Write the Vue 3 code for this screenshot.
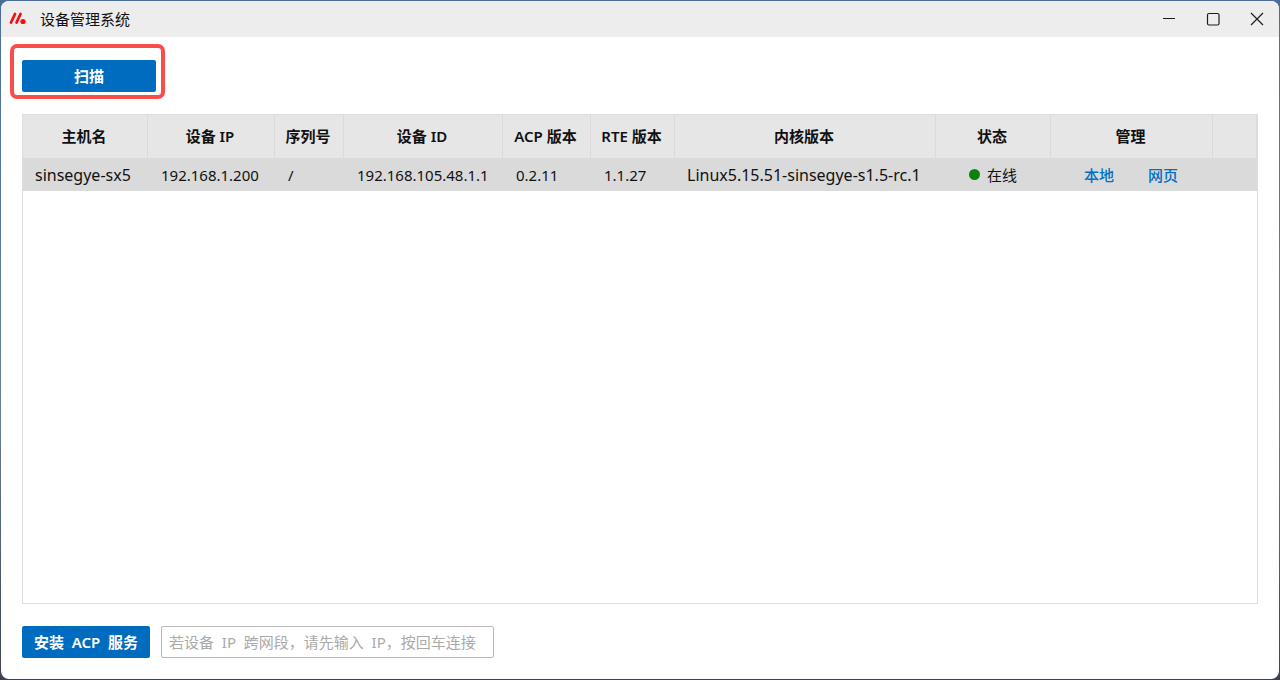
<script setup>
import { ref } from 'vue'

const address = ref('')

const columns = [
  { title: '主机名', cls: 'host' },
  { title: '设备 IP', cls: 'ip' },
  { title: '序列号', cls: 'serial' },
  { title: '设备 ID', cls: 'device' },
  { title: 'ACP 版本', cls: 'acp' },
  { title: 'RTE 版本', cls: 'rte' },
  { title: '内核版本', cls: 'kernel' },
  { title: '状态', cls: 'status' },
  { title: '管理', cls: 'manage' },
  { title: '', cls: 'rest' },
]

const devices = [
  {
    host: 'sinsegye-sx5',
    ip: '192.168.1.200',
    serial: '/',
    id: '192.168.105.48.1.1',
    acp: '0.2.11',
    rte: '1.1.27',
    kernel: 'Linux5.15.51-sinsegye-s1.5-rc.1',
    status: '在线',
  },
]
</script>

<template>
  <div class="desktop">
    <div class="window">
      <header class="titlebar">
        <svg class="logo" viewBox="0 0 18 14" aria-hidden="true">
          <path d="M2 10.5 6 2M7.5 10.5l4-8.5" fill="none" stroke="#fb0d12" stroke-width="2.8" stroke-linecap="round" />
          <circle cx="14" cy="9.5" r="2.6" fill="#fb0d12" />
        </svg>
        <h1>设备管理系统</h1>
        <div class="controls">
          <button type="button" aria-label="最小化">
            <svg viewBox="0 0 14 14"><path d="M1 6.5h12" /></svg>
          </button>
          <button type="button" aria-label="最大化">
            <svg viewBox="0 0 14 14"><rect x="1.5" y="1.5" width="11.5" height="11.5" rx="1.5" /></svg>
          </button>
          <button type="button" aria-label="关闭">
            <svg viewBox="0 0 14 14"><path d="m1 1 12 12M13 1 1 13" /></svg>
          </button>
        </div>
      </header>

      <main class="content">
        <div class="highlight">
          <button type="button" class="primary scan">扫描</button>
        </div>

        <div class="grid">
          <table>
            <colgroup>
              <col v-for="c in columns" :key="c.cls" :class="c.cls" />
            </colgroup>
            <thead>
              <tr>
                <th v-for="c in columns" :key="c.cls" scope="col">{{ c.title }}</th>
              </tr>
            </thead>
            <tbody>
              <tr v-for="d in devices" :key="d.id">
                <td class="name">{{ d.host }}</td>
                <td>{{ d.ip }}</td>
                <td>{{ d.serial }}</td>
                <td>{{ d.id }}</td>
                <td>{{ d.acp }}</td>
                <td>{{ d.rte }}</td>
                <td class="name">{{ d.kernel }}</td>
                <td>
                  <span class="state"><span class="dot"></span>{{ d.status }}</span>
                </td>
                <td>
                  <span class="links"><a href="#local">本地</a><a href="#web">网页</a></span>
                </td>
                <td></td>
              </tr>
            </tbody>
          </table>
        </div>

        <footer class="actions">
          <button type="button" class="primary install">安装&nbsp; ACP&nbsp; 服务</button>
          <input
            v-model="address"
            type="text"
            aria-label="设备 IP"
            placeholder="若设备  IP  跨网段，请先输入  IP，按回车连接"
          />
        </footer>
      </main>
    </div>
  </div>
</template>

<style>
body {
  margin: 0;
}
</style>

<style scoped>
.desktop {
  box-sizing: border-box;
  height: 100vh;
  padding: 1px;
  background: linear-gradient(#4a6d9c, #66809c 60%, #3c4152);
  font-family: "Noto Sans", "Noto Sans CJK SC", sans-serif;
  font-size: 15px;
  color: #111;
}

.window {
  display: flex;
  flex-direction: column;
  height: 100%;
  overflow: hidden;
  border-radius: 8px;
  background: #fff;
}

.titlebar {
  display: flex;
  flex: none;
  align-items: center;
  height: 36px;
  padding: 0 15px 0 8px;
  background: #ededed;
}

.logo {
  width: 18px;
  height: 14px;
}

h1 {
  margin: 0 auto 0 13px;
  padding-bottom: 2px;
  font-size: 15px;
  font-weight: 400;
}

.controls {
  display: flex;
  gap: 30px;
}

.controls button {
  display: flex;
  padding: 0;
  border: 0;
  background: none;
}

.controls svg {
  width: 14px;
  height: 14px;
  fill: none;
  stroke: #1c1c1c;
  stroke-width: 1.2;
}

.content {
  display: flex;
  flex: 1;
  flex-direction: column;
  align-items: flex-start;
  min-height: 0;
  padding: 7px 21px 21px;
}

.highlight {
  margin: 0 0 15px -12px;
  padding: 12px 5px 3px 8px;
  border: 4px solid #f94d4b;
  border-radius: 7px;
}

.primary {
  display: block;
  height: 32px;
  padding: 0 0 2px;
  border: 0;
  border-radius: 2px;
  background: #006cbf;
  color: #fff;
  font: inherit;
  font-weight: 600;
}

.scan {
  width: 134px;
}

.grid {
  box-sizing: border-box;
  flex: 1;
  width: 100%;
  min-height: 0;
  border: 1px solid #dedede;
}

table {
  width: 100%;
  table-layout: fixed;
  border-collapse: separate;
  border-spacing: 0;
}

.host { width: 125px; }
.ip { width: 127px; }
.serial { width: 69px; }
.device { width: 159px; }
.acp { width: 88px; }
.rte { width: 84px; }
.kernel { width: 261px; }
.status { width: 115px; }
.manage { width: 162px; }

th,
td {
  box-sizing: border-box;
  white-space: nowrap;
}

th {
  height: 43px;
  padding: 0 2px 2px 0;
  border-right: 1px solid #dadada;
  background: #e6e6e6;
  font-weight: 600;
  text-align: center;
}

td {
  height: 33px;
  padding: 0 0 0 13px;
  background: #dadada;
}

.name {
  padding-left: 12px;
  font-size: 16px;
}

.state {
  display: flex;
  align-items: center;
  gap: 7px;
  padding-left: 20px;
}

.dot {
  width: 11px;
  height: 11px;
  border-radius: 50%;
  background: #0c820e;
}

.links {
  display: flex;
  gap: 34px;
  padding-left: 20px;
}

a {
  color: #0070c5;
  font-weight: 500;
  text-decoration: none;
}

.actions {
  display: flex;
  gap: 11px;
  margin-top: 22px;
}

.install {
  width: 128px;
  white-space: nowrap;
}

input {
  box-sizing: border-box;
  width: 333px;
  height: 32px;
  padding: 0 7px;
  border: 1px solid #b9b9b9;
  border-radius: 2px;
  color: #111;
  font: inherit;
}

input::placeholder {
  color: #aaa;
  white-space: pre;
}
</style>
